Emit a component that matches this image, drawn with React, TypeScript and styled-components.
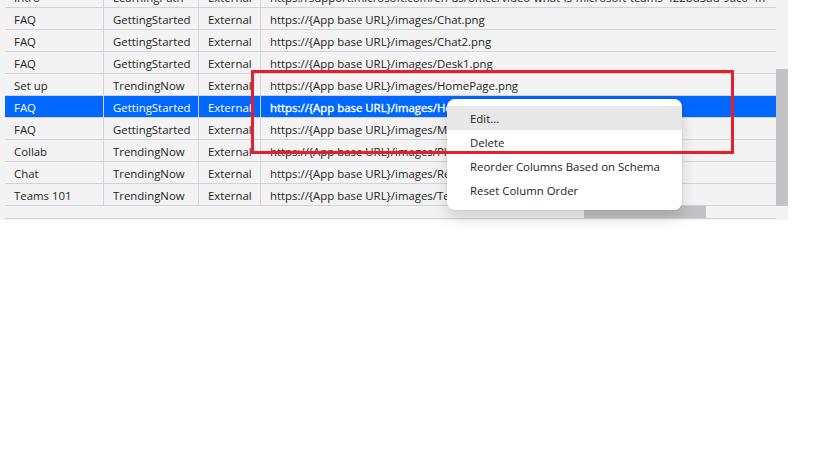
import React from "react";
import styled, { createGlobalStyle } from "styled-components";

const Global = createGlobalStyle`
  html, body { margin: 0; padding: 0; background: #ffffff; }
  body { font-family: "Open Sans", "Noto Sans", sans-serif; }
  * { box-sizing: border-box; }
`;

const Page = styled.div`
  position: relative;
  width: 819px;
  height: 460px;
  overflow: hidden;
`;

const Panel = styled.div`
  width: 788px;
  height: 220px;
  background: #f3f3f3;
  display: flex;
  flex-direction: column;
`;

const Main = styled.div`
  display: flex;
  height: 206px;
`;

const Viewport = styled.div`
  flex: 1;
  overflow: hidden;
  padding-left: 5px;
`;

const Body = styled.div`
  margin-top: -14px;
`;

const Row = styled.div<{ $selected?: boolean }>`
  display: grid;
  grid-template-columns: 99px 95px 62px 1fr;
  height: 22px;
  border-bottom: 1px solid #d2d2dc;
  background: ${(p) => (p.$selected ? "#0067ff" : "transparent")};
  color: ${(p) => (p.$selected ? "#ffffff" : "#242424")};
`;

const Cell = styled.div<{ $last?: boolean; $bold?: boolean }>`
  padding: 2px 0 0 9px;
  font-size: 11.4px;
  line-height: 20px;
  white-space: nowrap;
  overflow: hidden;
  -webkit-text-stroke: ${(p) => (p.$bold ? "0.35px #ffffff" : "0")};
  border-right: ${(p) => (p.$last ? "none" : "1px solid #d2d2dc")};
`;

const VTrack = styled.div`
  width: 12px;
  display: flex;
  flex-direction: column;
  justify-content: flex-end;
`;

const VThumb = styled.div`
  height: 137px;
  background: #c2c2c6;
`;

const HBar = styled.div`
  height: 14px;
  padding-left: 5px;
  display: flex;
`;

const HTrack = styled.div`
  width: 771px;
  height: 13px;
  border-bottom: 1px solid #d2d2dc;
  display: flex;
`;

const HThumb = styled.div`
  margin-left: 579px;
  width: 122px;
  height: 12px;
  background: #c2c2c6;
`;

const Menu = styled.div`
  position: absolute;
  left: 447px;
  top: 99px;
  width: 235px;
  padding: 7px 0 8px;
  background: #ffffff;
  border-radius: 8px;
  box-shadow: 0 8px 16px rgba(0, 0, 0, 0.14), 0 0 2px rgba(0, 0, 0, 0.12);
  display: flex;
  flex-direction: column;
`;

const MenuItem = styled.div<{ $active?: boolean }>`
  height: 24px;
  padding: 3px 0 0 23px;
  line-height: 20px;
  font-size: 11.4px;
  color: #242424;
  background: ${(p) => (p.$active ? "#e8e8e8" : "transparent")};
  white-space: nowrap;
`;

const Highlight = styled.div`
  position: absolute;
  left: 251px;
  top: 70px;
  width: 483px;
  height: 84px;
  border: 3px solid #e81e2b;
  pointer-events: none;
`;

type RowData = { title: string; section: string; kind: string; url: string; selected?: boolean };

const rows: RowData[] = [
  { title: "Intro", section: "LearningPath", kind: "External", url: "https://support.microsoft.com/en-us/office/video-what-is-microsoft-teams-422bd3ad-9ac0-4ff" },
  { title: "FAQ", section: "GettingStarted", kind: "External", url: "https://{App base URL}/images/Chat.png" },
  { title: "FAQ", section: "GettingStarted", kind: "External", url: "https://{App base URL}/images/Chat2.png" },
  { title: "FAQ", section: "GettingStarted", kind: "External", url: "https://{App base URL}/images/Desk1.png" },
  { title: "Set up", section: "TrendingNow", kind: "External", url: "https://{App base URL}/images/HomePage.png" },
  { title: "FAQ", section: "GettingStarted", kind: "External", url: "https://{App base URL}/images/HomePage2.png", selected: true },
  { title: "FAQ", section: "GettingStarted", kind: "External", url: "https://{App base URL}/images/Meeting.png" },
  { title: "Collab", section: "TrendingNow", kind: "External", url: "https://{App base URL}/images/Planner.png" },
  { title: "Chat", section: "TrendingNow", kind: "External", url: "https://{App base URL}/images/Reply.png" },
  { title: "Teams 101", section: "TrendingNow", kind: "External", url: "https://{App base URL}/images/Teams.png" },
];

const menuItems = ["Edit...", "Delete", "Reorder Columns Based on Schema", "Reset Column Order"];

export default function App() {
  return (
    <Page>
      <Global />
      <Panel>
        <Main>
          <Viewport>
            <Body>
              {rows.map((r, i) => (
                <Row key={i} $selected={r.selected}>
                  <Cell>{r.title}</Cell>
                  <Cell>{r.section}</Cell>
                  <Cell>{r.kind}</Cell>
                  <Cell $last $bold={r.selected}>{r.url}</Cell>
                </Row>
              ))}
            </Body>
          </Viewport>
          <VTrack>
            <VThumb />
          </VTrack>
        </Main>
        <HBar>
          <HTrack>
            <HThumb />
          </HTrack>
        </HBar>
      </Panel>
      <Menu>
        {menuItems.map((m, i) => (
          <MenuItem key={m} $active={i === 0}>{m}</MenuItem>
        ))}
      </Menu>
      <Highlight />
    </Page>
  );
}
